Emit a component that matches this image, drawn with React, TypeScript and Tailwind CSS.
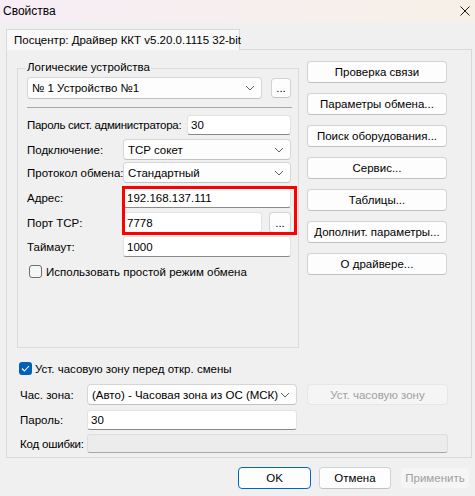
import React from 'react';

const font = "font-['Liberation_Sans',Arial,sans-serif]";

function Chevron() {
  return (
    <svg width="10" height="6" viewBox="0 0 10 6" className="shrink-0">
      <path d="M1 1 L5 5 L9 1" fill="none" stroke="#5f5f5f" strokeWidth="1" />
    </svg>
  );
}

function Combo({ value, className = '' }: { value: string; className?: string }) {
  return (
    <div
      className={`flex items-center justify-between rounded-[4px] border border-[#d6d6d6] border-b-[#c2c2c2] bg-[#fdfdfd] pl-[4px] pr-[6px] ${className}`}
    >
      <span className="whitespace-nowrap">{value}</span>
      <Chevron />
    </div>
  );
}

function TextBox({ value, className = '' }: { value: string; className?: string }) {
  return (
    <div
      className={`flex items-center rounded-[3px] border border-[#e3e3e3] border-b-[#8a8a8a] bg-white pl-[3px] ${className}`}
    >
      {value}
    </div>
  );
}

function Btn({
  label,
  className = '',
  disabled,
  primary,
}: {
  label: string;
  className?: string;
  disabled?: boolean;
  primary?: boolean;
}) {
  let look = 'border-[#d3d3d3] border-b-[#c2c2c2] bg-[#fdfdfd] text-black';
  if (disabled) look = 'border-[#e6e6e6] bg-[#f5f5f5] text-[#a0a0a0]';
  if (primary) look = 'border-[#0067c0] bg-[#fdfdfd] text-black';
  return (
    <div className={`flex items-center justify-center whitespace-nowrap rounded-[4px] border ${look} ${className}`}>
      {label}
    </div>
  );
}

function CheckBox({ checked }: { checked?: boolean }) {
  if (checked) {
    return (
      <div className="flex h-[13px] w-[13px] shrink-0 items-center justify-center rounded-[3px] bg-[#005fb8]">
        <svg width="9" height="7" viewBox="0 0 9 7">
          <path d="M1 3.5 L3.4 6 L8 1" fill="none" stroke="#ffffff" strokeWidth="1.1" />
        </svg>
      </div>
    );
  }
  return <div className="h-[13px] w-[13px] shrink-0 rounded-[3px] border border-[#6e6e6e] bg-[#f6f6f6]" />;
}

const sideButtons = [
  'Проверка связи',
  'Параметры обмена...',
  'Поиск оборудования...',
  'Сервис...',
  'Таблицы...',
  'Дополнит. параметры...',
  'О драйвере...',
];

export default function App() {
  return (
    <div
      className={`flex h-[496px] w-[475px] flex-col whitespace-nowrap bg-[#f0f0f0] text-[11.5px] leading-[14px] text-black ${font}`}
    >
      {/* title bar */}
      <div className="flex h-[22px] items-center justify-between bg-gradient-to-r from-[#f7edf6] to-[#f7f0e7] pl-[3px] pr-[5px]">
        <span className="text-[12px]">Свойства</span>
        <svg width="10" height="10" viewBox="0 0 10 10">
          <path d="M0.5 0.5 L9.5 9.5 M9.5 0.5 L0.5 9.5" stroke="#1a1a1a" strokeWidth="1" />
        </svg>
      </div>

      {/* tab */}
      <div className="mt-[7px] flex pl-[6px]">
        <div className="relative z-10 -mb-px flex h-[21px] w-[234px] items-center border border-b-0 border-[#d9d9d9] bg-[#f9f9f9] pl-[7px]">
          Посцентр: Драйвер ККТ v5.20.0.1115 32-bit
        </div>
      </div>

      {/* tab panel */}
      <div className="ml-[6px] flex h-[409px] w-[466px] flex-col border border-[#d9d9d9] bg-[#f0f0f0]">
        <div className="flex items-start">
          {/* group box */}
          <div className="ml-[10px] mt-[18px] flex h-[280px] w-[282px] flex-col border border-[#dcdcdc] pl-[9px]">
            <div className="-ml-[1px] -mt-[9px] h-[14px] w-fit bg-[#f0f0f0] px-[1px]">Логические устройства</div>

            <div className="mt-[3px] flex h-[22px] items-center">
              <Combo value="№ 1 Устройство №1" className="h-[22px] w-[235px]" />
              <Btn label="..." className="ml-[9px] h-[20px] w-[20px]" />
            </div>

            <div className="mt-[8px] h-px w-[265px] bg-[#a8a8a8]" />

            <div className="mt-[7px] flex h-[20px] w-[264px] items-center justify-between">
              <span className="tracking-[-0.3px]">Пароль сист. администратора:</span>
              <TextBox value="30" className="h-[20px] w-[104px] shrink-0" />
            </div>

            <div className="mt-[4px] flex h-[21px] items-center">
              <span className="w-[96px]">Подключение:</span>
              <Combo value="TCP сокет" className="h-[21px] w-[168px]" />
            </div>

            <div className="mt-[2px] flex h-[21px] items-center">
              <span className="w-[96px]">Протокол обмена:</span>
              <Combo value="Стандартный" className="h-[21px] w-[168px]" />
            </div>

            <div className="relative">
              <div className="mt-[4px] flex h-[21px] items-center">
                <span className="w-[96px]">Адрес:</span>
                <TextBox value="192.168.137.111" className="h-[21px] w-[168px]" />
              </div>
              <div className="mt-[4px] flex h-[21px] items-center">
                <span className="w-[96px]">Порт TCP:</span>
                <TextBox value="7778" className="h-[21px] w-[139px]" />
                <Btn label="..." className="ml-[7px] h-[21px] w-[22px]" />
              </div>
              <div className="absolute left-[95px] top-[3px] h-[49px] w-[175px] border-[3px] border-[#ff0000]" />
            </div>

            <div className="mt-[3px] flex h-[21px] items-center">
              <span className="w-[96px]">Таймаут:</span>
              <TextBox value="1000" className="h-[21px] w-[168px]" />
            </div>

            <div className="mt-[8px] flex h-[13px] items-center pl-[2px]">
              <CheckBox />
              <span className="ml-[4px]">Использовать простой режим обмена</span>
            </div>
          </div>

          {/* side buttons */}
          <div className="ml-[8px] mt-[11px] flex flex-col gap-[10px]">
            {sideButtons.map((b) => (
              <Btn key={b} label={b} className="h-[22px] w-[140px]" />
            ))}
          </div>
        </div>

        {/* bottom section */}
        <div className="flex flex-col pl-[12px]">
          <div className="mt-[14px] flex h-[13px] items-center">
            <CheckBox checked />
            <span className="ml-[3px]">Уст. часовую зону перед откр. смены</span>
          </div>

          <div className="mt-[9px] flex h-[21px] items-center">
            <span className="w-[68px] pl-px">Час. зона:</span>
            <Combo value="(Авто) - Часовая зона из ОС (МСК)" className="h-[21px] w-[210px]" />
            <Btn label="Уст. часовую зону" disabled className="ml-[10px] h-[21px] w-[141px]" />
          </div>

          <div className="mt-[5px] flex h-[20px] items-center">
            <span className="w-[68px] pl-px">Пароль:</span>
            <TextBox value="30" className="h-[20px] w-[210px]" />
          </div>

          <div className="mt-[4px] flex h-[19px] items-center">
            <span className="w-[68px] pl-px tracking-[-0.2px]">Код ошибки:</span>
            <div className="h-[19px] w-[361px] rounded-[3px] border border-[#dedede] border-b-[#a8a8a8] bg-[#ececec]" />
          </div>
        </div>
      </div>

      {/* dialog buttons */}
      <div className="mt-[9px] flex justify-end pr-[5px]">
        <Btn label="OK" primary className="h-[22px] w-[73px]" />
        <Btn label="Отмена" className="ml-[8px] h-[22px] w-[72px]" />
        <Btn label="Применить" disabled className="ml-[9px] h-[22px] w-[70px] border-[#f0f0f0]" />
      </div>
    </div>
  );
}
